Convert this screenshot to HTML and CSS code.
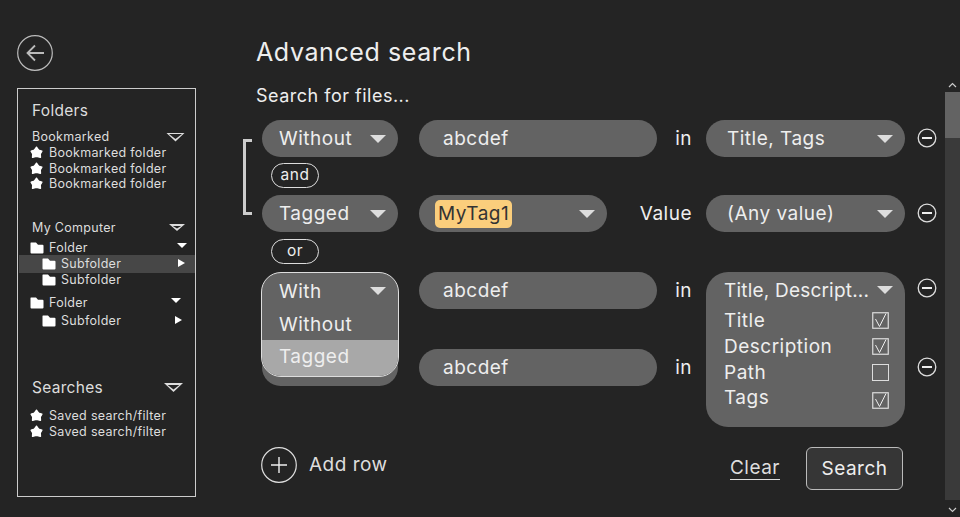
FILE: index.html
```html
<!DOCTYPE html>
<html lang="en">
<head>
    <meta charset="UTF-8">
    <meta name="viewport" content="width=device-width, initial-scale=1.0">
    <title>Advanced search</title>
    <link rel="stylesheet" href="styles.css">
</head>
<body>
    <svg class="defs" width="0" height="0">
        <symbol id="star" viewBox="0 0 12 12"><path d="M6 1 8 3.800l3 1-1.500 2.500.2 3.200L6 9.600l-3.700.9.200-3.200L1 4.800l3-1z" fill="#fff" stroke="#fff" stroke-width="1.200" stroke-linejoin="round"/></symbol>
        <symbol id="folder" viewBox="0 0 14 12"><path d="M1 .5h5l2 2.200h4.500q1 0 1 1v6.800q0 1-1 1H1.500q-1 0-1-1V1q0-.5.5-.5z" fill="#fff"/></symbol>
        <symbol id="minus" viewBox="0 0 20 20"><circle cx="10" cy="10" r="8.800" fill="none" stroke="#ddd" stroke-width="1.300"/><path d="M5 10h10" stroke="#eee" stroke-width="2"/></symbol>
        <symbol id="check" viewBox="0 0 17 17"><rect x=".75" y=".75" width="15.500" height="15.500" fill="none" stroke="#ddd" stroke-width="1.200"/><path d="M3.500 7 7.500 14.500 14 1.500" fill="none" stroke="#eee" stroke-width="1"/></symbol>
    </svg>

    <div class="app">
        <aside class="side">
            <button class="back" aria-label="Back">
                <svg width="36" height="36" viewBox="0 0 36 36"><circle cx="18" cy="18" r="17.300" fill="none" stroke="#bbb" stroke-width="1.200"/><path d="M27 18H11M18 10.500 10.500 18l7.500 7.500" fill="none" stroke="#bbb" stroke-width="1.800"/></svg>
            </button>

            <nav class="panel">
                <h2 class="panel-title">Folders</h2>

                <div class="group-head bookmarked">Bookmarked <span class="tri-outline"></span></div>
                <div class="item"><svg class="star"><use href="#star"/></svg>Bookmarked folder</div>
                <div class="item"><svg class="star"><use href="#star"/></svg>Bookmarked folder</div>
                <div class="item"><svg class="star"><use href="#star"/></svg>Bookmarked folder</div>

                <div class="group-head computer">My Computer <span class="tri-outline small"></span></div>
                <div class="tree-row"><svg class="folder"><use href="#folder"/></svg>Folder<span class="tri-down"></span></div>
                <div class="tree-row sub selected"><svg class="folder"><use href="#folder"/></svg>Subfolder<span class="tri-right"></span></div>
                <div class="tree-row sub"><svg class="folder"><use href="#folder"/></svg>Subfolder</div>
                <div class="tree-row second"><svg class="folder"><use href="#folder"/></svg>Folder<span class="tri-down"></span></div>
                <div class="tree-row sub last-sub"><svg class="folder"><use href="#folder"/></svg>Subfolder<span class="tri-right"></span></div>

                <h2 class="panel-title searches">Searches <span class="tri-outline"></span></h2>
                <div class="item saved"><svg class="star"><use href="#star"/></svg>Saved search/filter</div>
                <div class="item saved"><svg class="star"><use href="#star"/></svg>Saved search/filter</div>
            </nav>
        </aside>

        <main class="main">
            <h1>Advanced search</h1>
            <p class="lead">Search for files...</p>

            <div class="rows">
                <div class="bracket"></div>

                <div class="row">
                    <div class="pill select">Without<span class="caret"></span></div>
                    <div class="pill input">abcdef</div>
                    <div class="label">in</div>
                    <div class="pill select wide">Title, Tags<span class="caret"></span></div>
                    <svg class="minus"><use href="#minus"/></svg>
                </div>

                <div class="joiner">and</div>

                <div class="row">
                    <div class="pill select">Tagged<span class="caret"></span></div>
                    <div class="pill select tag-select"><span class="tag">MyTag1</span><span class="caret"></span></div>
                    <div class="label">Value</div>
                    <div class="pill select wide">(Any value)<span class="caret"></span></div>
                    <svg class="minus"><use href="#minus"/></svg>
                </div>

                <div class="joiner or">or</div>

                <div class="row">
                    <div class="menu-cell">
                        <div class="menu">
                            <div class="menu-item first">With<span class="caret"></span></div>
                            <div class="menu-item">Without</div>
                            <div class="menu-item active">Tagged</div>
                        </div>
                    </div>
                    <div class="pill input">abcdef</div>
                    <div class="label">in</div>
                    <div class="fields-cell">
                        <div class="fields">
                            <div class="fields-head"><span class="fields-summary">Title, Descript...</span><span class="caret"></span></div>
                            <div class="field">Title<svg class="check"><use href="#check"/></svg></div>
                            <div class="field">Description<svg class="check"><use href="#check"/></svg></div>
                            <div class="field">Path<span class="box"></span></div>
                            <div class="field last">Tags<svg class="check"><use href="#check"/></svg></div>
                        </div>
                    </div>
                    <svg class="minus up"><use href="#minus"/></svg>
                </div>

                <div class="row fourth">
                    <div class="pill select"></div>
                    <div class="pill input">abcdef</div>
                    <div class="label">in</div>
                    <div></div>
                    <svg class="minus"><use href="#minus"/></svg>
                </div>
            </div>

            <div class="actions">
                <div class="add-row">
                    <svg width="36" height="36" viewBox="0 0 36 36"><circle cx="18" cy="18" r="17.300" fill="none" stroke="#ddd" stroke-width="1.200"/><path d="M18 10v16M10 18h16" stroke="#eee" stroke-width="1.400"/></svg>
                    Add row
                </div>
                <a class="clear" href="#">Clear</a>
                <button class="search">Search</button>
            </div>
        </main>

        <div class="scroll">
            <svg class="arrow" width="9" height="6" viewBox="0 0 9 6"><path d="M1 5 4.500 1.500 8 5" fill="none" stroke="#ccc" stroke-width="1.200"/></svg>
            <div class="track"><div class="thumb"></div></div>
            <svg class="arrow down" width="9" height="6" viewBox="0 0 9 6"><path d="M1 1 4.500 4.500 8 1" fill="none" stroke="#ccc" stroke-width="1.200"/></svg>
        </div>
    </div>
</body>
</html>
```

FILE: styles.css
```css
* {
    box-sizing: border-box;
}
html, body {
    height: 100%;
}
body {
    margin: 0;
    background-color: #242424;
    color: #eee;
    font-family: Inter, "Noto Sans", sans-serif;
    overflow: hidden;
}
.defs {
    position: absolute;
}
.app {
    display: flex;
    height: 517px;
}

/* left column */
.side {
    width: 179px;
    margin-left: 17px;
    padding-top: 35px;
    flex: none;
}
.back {
    display: block;
    width: 36px;
    height: 36px;
    padding: 0;
    border: none;
    background: none;
}
.panel {
    height: 409px;
    margin-top: 17px;
    padding-top: 12px;
    border: 1.500px solid #ccc;
    font-size: 12.500px;
    letter-spacing: 0.3px;
    color: #ddd;
}
.panel-title {
    margin: 0;
    padding: 0 11px 0 14px;
    font-size: 15.500px;
    font-weight: 400;
    line-height: 20px;
    letter-spacing: 0.3px;
    display: flex;
    justify-content: space-between;
    align-items: center;
}
.group-head {
    display: flex;
    justify-content: space-between;
    align-items: center;
    padding: 0 10px 0 14px;
    line-height: 16px;
}
.bookmarked {
    margin-top: 8px;
}
.computer {
    margin-top: 28px;
    margin-bottom: 4px;
}
.searches {
    margin-top: 49px;
    margin-bottom: 10px;
    padding-right: 12px;
}
.item {
    display: flex;
    align-items: center;
    height: 15.500px;
    padding-left: 12px;
}
.item.saved {
    height: 16px;
}
.star {
    width: 13px;
    height: 13px;
    margin-right: 6px;
}
.tree-row {
    display: flex;
    align-items: center;
    height: 16px;
    padding: 0 8px 0 12px;
}
.tree-row .folder {
    margin-right: 5px;
}
.tree-row.sub {
    padding-left: 24px;
}
.tree-row.second {
    margin-top: 7px;
    padding-right: 14px;
}
.tree-row.last-sub {
    margin-top: 2px;
    padding-right: 13px;
}
.tree-row.selected {
    margin: -1px 0 -1px 1px;
    padding-left: 23px;
    padding-right: 10px;
    height: 18px;
    background-color: #474747;
}
.folder {
    width: 14px;
    height: 12px;
}
.tri-outline {
    width: 19px;
    height: 9px;
    background: #ddd;
    clip-path: polygon(0 0, 100% 0, 50% 100%);
    position: relative;
}
.tri-outline::after {
    content: "";
    position: absolute;
    inset: 1.500px 3px 2.500px;
    background: #242424;
    clip-path: polygon(0 0, 100% 0, 50% 100%);
}
.tri-outline.small {
    width: 16px;
    height: 7px;
}
.tri-down {
    margin-left: auto;
    margin-top: -4px;
    width: 0;
    height: 0;
    border: 5px solid transparent;
    border-top: 5px solid #fff;
    border-bottom: none;
}
.tri-right {
    margin-left: auto;
    margin-top: -2px;
    width: 0;
    height: 0;
    border: 4px solid transparent;
    border-left: 7px solid #fff;
    border-right: none;
}

/* main column */
.main {
    flex: 1;
    padding: 36px 0 0 60px;
}
h1 {
    margin: 0;
    font-size: 25px;
    font-weight: 400;
    line-height: 32px;
    letter-spacing: 0.6px;
}
.lead {
    margin: 16px 0 12px;
    font-size: 18px;
    line-height: 24px;
    letter-spacing: 0.5px;
}
.rows {
    position: relative;
    margin-left: 6px;
    font-size: 19px;
    letter-spacing: 0.5px;
}
.bracket {
    position: absolute;
    left: -19px;
    top: 19px;
    width: 9px;
    height: 76px;
    border: 3px solid #ccc;
    border-right: none;
}
.row {
    display: grid;
    grid-template-columns: 136px 259px 49px 199px 34px;
    height: 37px;
}
.row > :nth-child(2) {
    margin-left: 21px;
}
.row.fourth {
    margin-top: 40px;
}
.pill {
    display: flex;
    align-items: center;
    height: 37px;
    border-radius: 19px;
    background-color: #636363;
}
.select {
    justify-content: space-between;
    padding: 0 12px 0 17px;
}
.input {
    padding-left: 24px;
}
.tag-select {
    width: 188px;
    padding-left: 16px;
}
.wide {
    padding-left: 21px;
}
.tag {
    height: 28px;
    padding: 0 3px;
    line-height: 28px;
    border-radius: 5px;
    background-color: #fbce7c;
    color: #333;
}
.caret {
    flex: none;
    width: 0;
    height: 0;
    margin-left: auto;
    border-left: 8px solid transparent;
    border-right: 8px solid transparent;
    border-top: 8px solid #ddd;
}
.label {
    display: flex;
    align-items: center;
    justify-content: flex-end;
    padding-right: 14px;
    white-space: nowrap;
}
.minus {
    width: 20px;
    height: 20px;
    margin-left: 12px;
    margin-top: 8px;
}
.minus.up {
    margin-top: 6px;
}
.joiner {
    width: 48px;
    height: 25px;
    margin: 6px 0 7px 9px;
    border: 1.200px solid #ddd;
    border-radius: 13px;
    text-align: center;
    font-size: 15.500px;
    line-height: 22px;
}
.joiner.or {
    margin: 7px 0 8px 9px;
}
.menu-cell, .fields-cell {
    position: relative;
}
.menu {
    position: absolute;
    left: -1px;
    top: 0;
    z-index: 2;
    width: 138px;
    height: 105px;
    border: 1.200px solid #ddd;
    border-radius: 20px;
    background-color: #636363;
    overflow: hidden;
}
.menu-item {
    display: flex;
    align-items: center;
    height: 31px;
    padding: 0 12px 0 17px;
}
.menu-item.first {
    height: 36px;
}
.menu-item.active {
    height: 38px;
    padding-bottom: 5px;
    background-color: #a8a8a8;
}
.fields {
    position: absolute;
    top: 0;
    left: 0;
    right: 0;
    z-index: 2;
    height: 155px;
    padding: 0 16px 0 18px;
    border-radius: 22px;
    background-color: #636363;
    white-space: nowrap;
}
.fields-head {
    display: flex;
    align-items: center;
    height: 36px;
    margin-right: -4px;
}
.fields-summary {
    letter-spacing: 0.2px;
}
.field {
    display: flex;
    align-items: center;
    justify-content: space-between;
    height: 25.700px;
}
.check, .box {
    width: 17px;
    height: 17px;
}
.box {
    border: 1.200px solid #ddd;
}
.field.last .check {
    margin-top: 6px;
}

/* bottom row */
.actions {
    display: flex;
    align-items: center;
    margin: 53px 0 0 5px;
    width: 642px;
}
.add-row {
    display: flex;
    align-items: center;
    gap: 12px;
    font-size: 19px;
    letter-spacing: 0.5px;
    color: #ddd;
    margin-right: auto;
}
.clear {
    margin-top: 7px;
    line-height: 23px;
    color: #ddd;
    font-size: 19px;
    letter-spacing: 0.5px;
    text-decoration: none;
    border-bottom: 1.500px solid #ddd;
}
.search {
    width: 97px;
    height: 43px;
    margin-left: 26px;
    margin-top: 8px;
    border: 1.500px solid #bbb;
    border-radius: 6px;
    background-color: #363636;
    color: #eee;
    font-family: inherit;
    font-size: 19px;
    letter-spacing: 0.5px;
}

/* scrollbar */
.scroll {
    width: 15px;
    flex: none;
    display: flex;
    flex-direction: column;
    align-items: center;
}
.arrow {
    margin-top: 82px;
    margin-bottom: 4px;
}
.arrow.down {
    margin-top: 7px;
    margin-bottom: 0;
}
.track {
    width: 15px;
    height: 408px;
    flex: none;
    background-color: #3a3a3a;
}
.thumb {
    height: 46px;
    background-color: #636363;
}
```
